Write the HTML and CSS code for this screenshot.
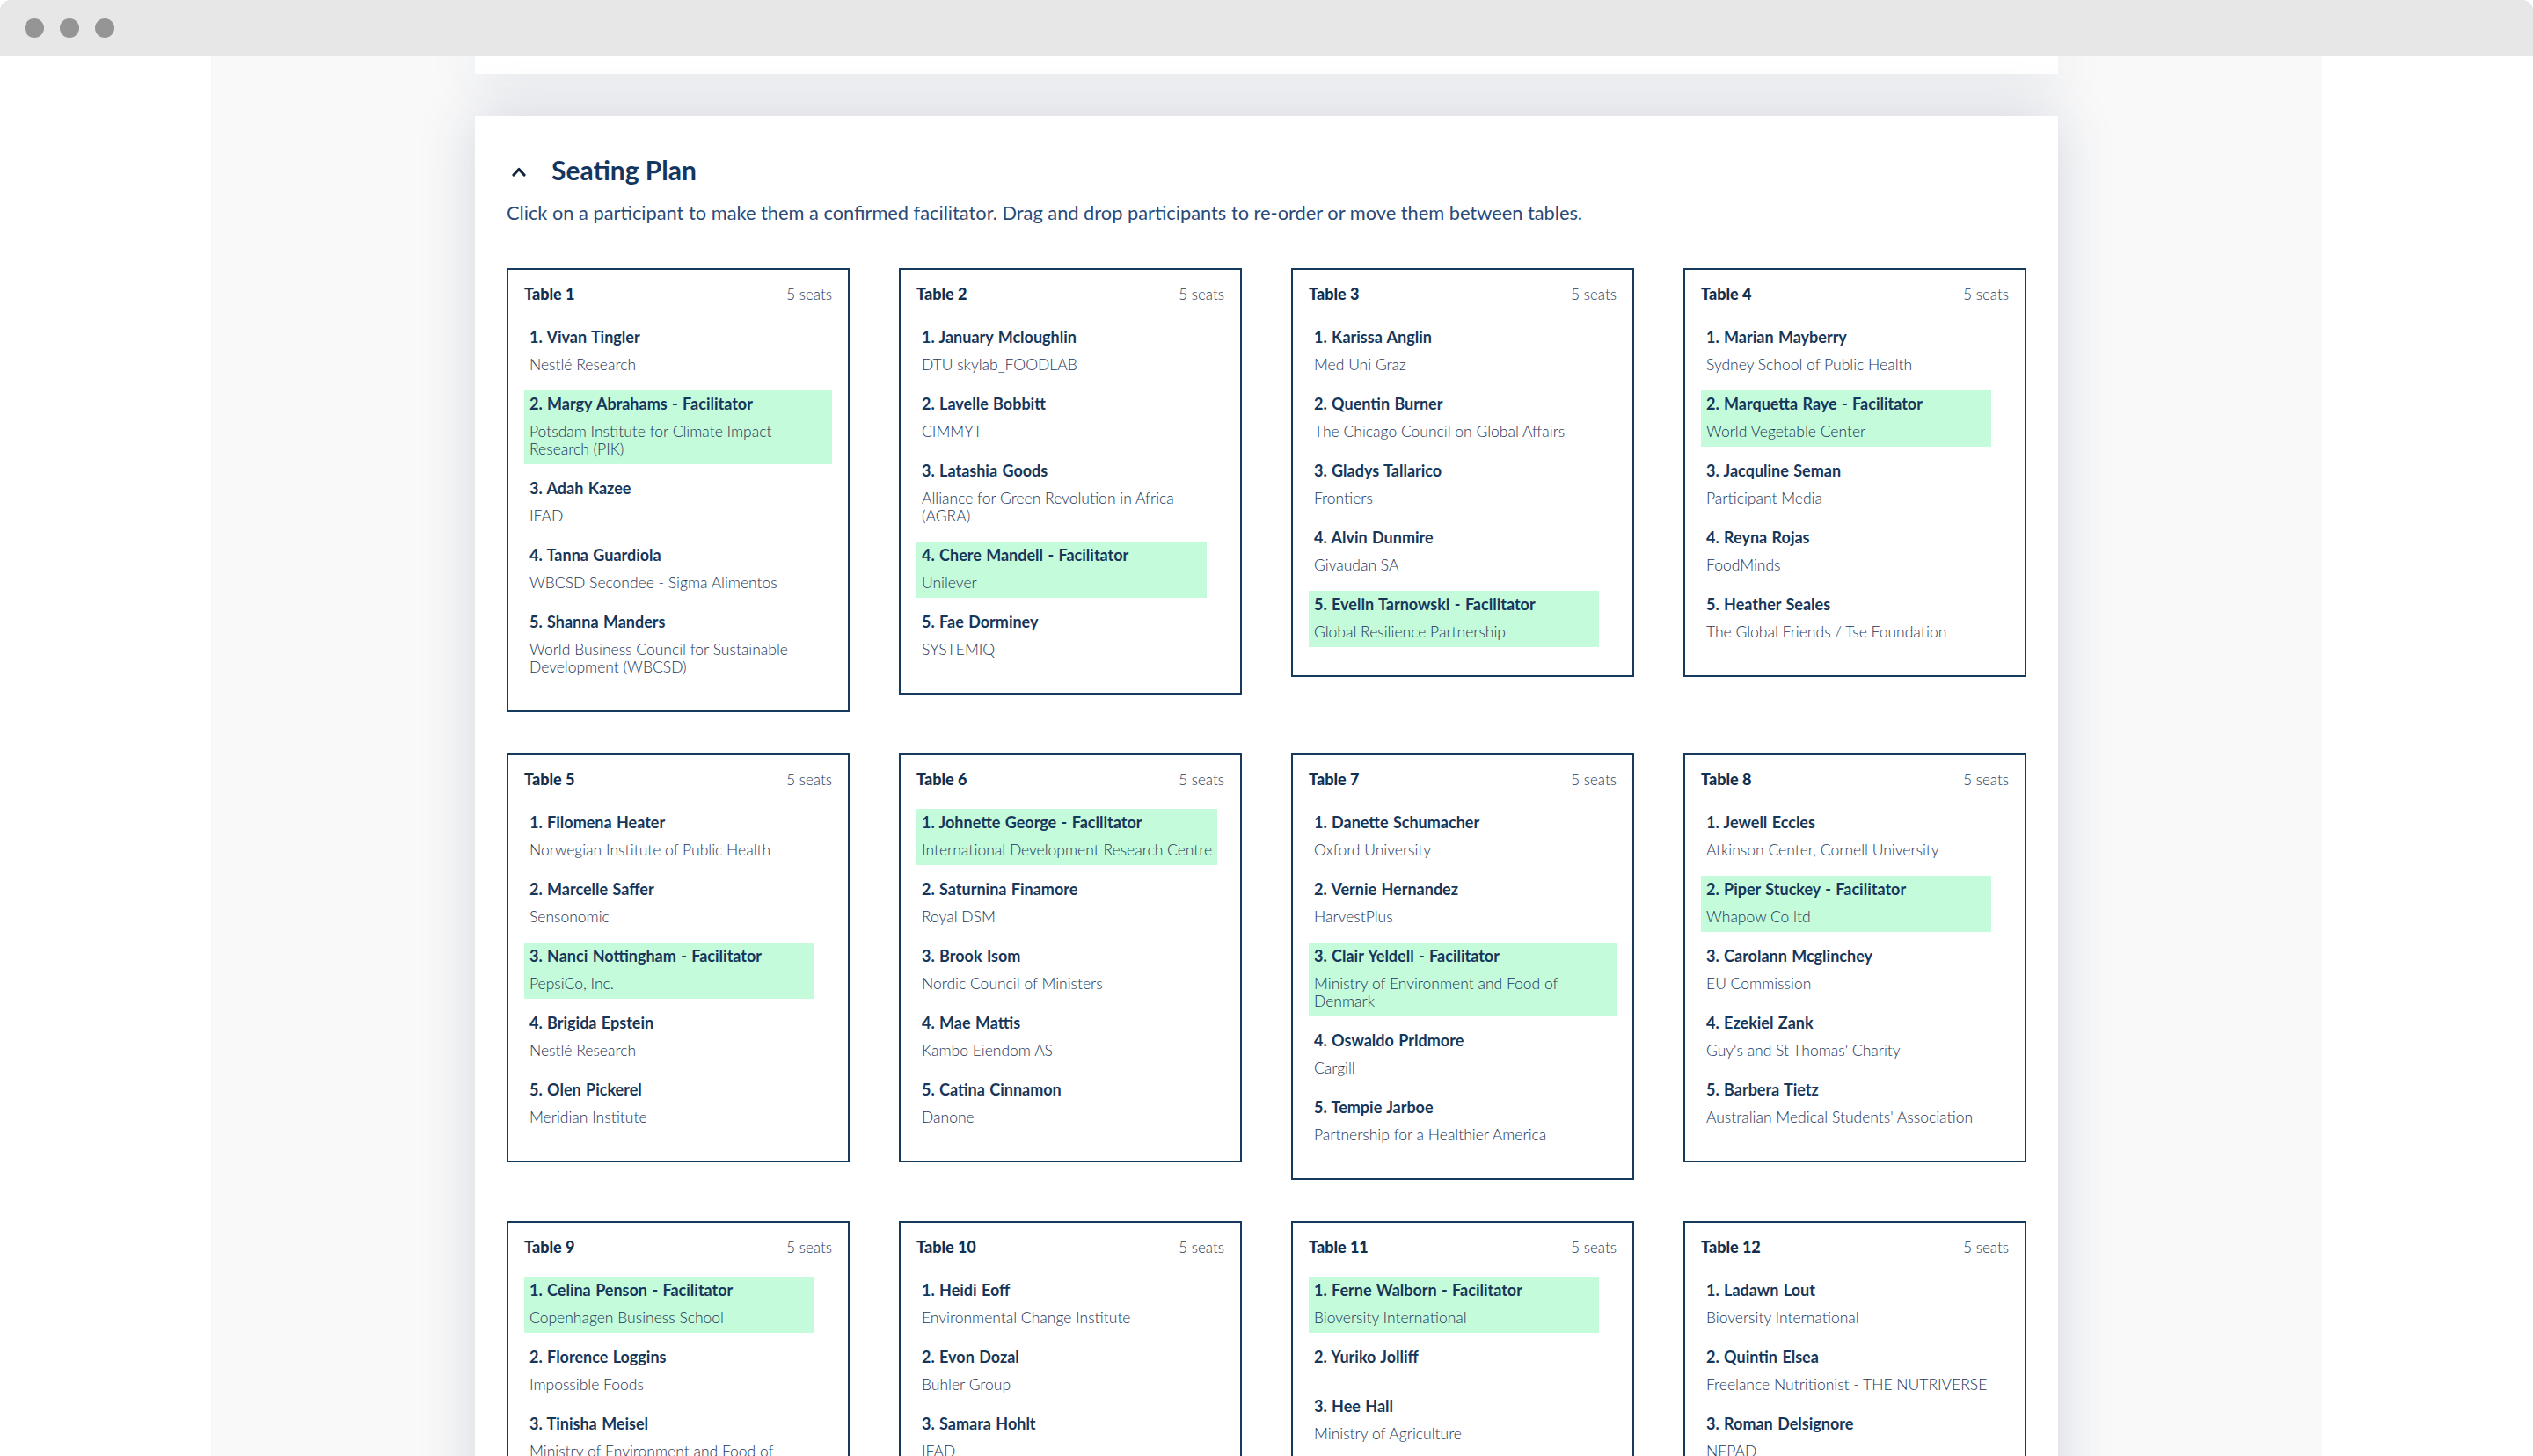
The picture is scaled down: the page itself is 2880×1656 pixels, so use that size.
FILE: index.html
```html
<!DOCTYPE html>
<html lang="en">
<head>
<meta charset="utf-8">
<title>Seating Plan</title>
<link rel="stylesheet" href="styles.css">
</head>
<body>
<div class="window">
  <div class="titlebar">
    <span class="dot"></span><span class="dot"></span><span class="dot"></span>
  </div>
  <div class="viewport">
    <div class="page">
      <div class="prev-card"></div>
      <section class="panel">
        <div class="panel-head">
          <svg class="chevron" width="16" height="12" viewBox="0 0 16 12"><polyline points="2,10 8,3.5 14,10" fill="none" stroke="#0f2540" stroke-width="3.2" stroke-linecap="round" stroke-linejoin="round"/></svg>
          <h2 class="panel-title">Seating Plan</h2>
        </div>
        <p class="panel-desc">Click on a participant to make them a confirmed facilitator. Drag and drop participants to re-order or move them between tables.</p>

        <div class="tables">
          <div class="table-card">
            <div class="table-head"><span class="table-name">Table 1</span><span class="table-seats">5 seats</span></div>
            <div class="person"><div class="name">1. Vivan Tingler</div><div class="org">Nestlé Research</div></div>
            <div class="person fac"><div class="name">2. Margy Abrahams - Facilitator</div><div class="org">Potsdam Institute for Climate Impact Research (PIK)</div></div>
            <div class="person"><div class="name">3. Adah Kazee</div><div class="org">IFAD</div></div>
            <div class="person"><div class="name">4. Tanna Guardiola</div><div class="org">WBCSD Secondee - Sigma Alimentos</div></div>
            <div class="person"><div class="name">5. Shanna Manders</div><div class="org">World Business Council for Sustainable Development (WBCSD)</div></div>
          </div>

          <div class="table-card">
            <div class="table-head"><span class="table-name">Table 2</span><span class="table-seats">5 seats</span></div>
            <div class="person"><div class="name">1. January Mcloughlin</div><div class="org">DTU skylab_FOODLAB</div></div>
            <div class="person"><div class="name">2. Lavelle Bobbitt</div><div class="org">CIMMYT</div></div>
            <div class="person"><div class="name">3. Latashia Goods</div><div class="org">Alliance for Green Revolution in Africa (AGRA)</div></div>
            <div class="person fac"><div class="name">4. Chere Mandell - Facilitator</div><div class="org">Unilever</div></div>
            <div class="person"><div class="name">5. Fae Dorminey</div><div class="org">SYSTEMIQ</div></div>
          </div>

          <div class="table-card">
            <div class="table-head"><span class="table-name">Table 3</span><span class="table-seats">5 seats</span></div>
            <div class="person"><div class="name">1. Karissa Anglin</div><div class="org">Med Uni Graz</div></div>
            <div class="person"><div class="name">2. Quentin Burner</div><div class="org">The Chicago Council on Global Affairs</div></div>
            <div class="person"><div class="name">3. Gladys Tallarico</div><div class="org">Frontiers</div></div>
            <div class="person"><div class="name">4. Alvin Dunmire</div><div class="org">Givaudan SA</div></div>
            <div class="person fac"><div class="name">5. Evelin Tarnowski - Facilitator</div><div class="org">Global Resilience Partnership</div></div>
          </div>

          <div class="table-card">
            <div class="table-head"><span class="table-name">Table 4</span><span class="table-seats">5 seats</span></div>
            <div class="person"><div class="name">1. Marian Mayberry</div><div class="org">Sydney School of Public Health</div></div>
            <div class="person fac"><div class="name">2. Marquetta Raye - Facilitator</div><div class="org">World Vegetable Center</div></div>
            <div class="person"><div class="name">3. Jacquline Seman</div><div class="org">Participant Media</div></div>
            <div class="person"><div class="name">4. Reyna Rojas</div><div class="org">FoodMinds</div></div>
            <div class="person"><div class="name">5. Heather Seales</div><div class="org">The Global Friends / Tse Foundation</div></div>
          </div>

          <div class="table-card">
            <div class="table-head"><span class="table-name">Table 5</span><span class="table-seats">5 seats</span></div>
            <div class="person"><div class="name">1. Filomena Heater</div><div class="org">Norwegian Institute of Public Health</div></div>
            <div class="person"><div class="name">2. Marcelle Saffer</div><div class="org">Sensonomic</div></div>
            <div class="person fac"><div class="name">3. Nanci Nottingham - Facilitator</div><div class="org">PepsiCo, Inc.</div></div>
            <div class="person"><div class="name">4. Brigida Epstein</div><div class="org">Nestlé Research</div></div>
            <div class="person"><div class="name">5. Olen Pickerel</div><div class="org">Meridian Institute</div></div>
          </div>

          <div class="table-card">
            <div class="table-head"><span class="table-name">Table 6</span><span class="table-seats">5 seats</span></div>
            <div class="person fac"><div class="name">1. Johnette George - Facilitator</div><div class="org">International Development Research Centre</div></div>
            <div class="person"><div class="name">2. Saturnina Finamore</div><div class="org">Royal DSM</div></div>
            <div class="person"><div class="name">3. Brook Isom</div><div class="org">Nordic Council of Ministers</div></div>
            <div class="person"><div class="name">4. Mae Mattis</div><div class="org">Kambo Eiendom AS</div></div>
            <div class="person"><div class="name">5. Catina Cinnamon</div><div class="org">Danone</div></div>
          </div>

          <div class="table-card">
            <div class="table-head"><span class="table-name">Table 7</span><span class="table-seats">5 seats</span></div>
            <div class="person"><div class="name">1. Danette Schumacher</div><div class="org">Oxford University</div></div>
            <div class="person"><div class="name">2. Vernie Hernandez</div><div class="org">HarvestPlus</div></div>
            <div class="person fac"><div class="name">3. Clair Yeldell - Facilitator</div><div class="org">Ministry of Environment and Food of Denmark</div></div>
            <div class="person"><div class="name">4. Oswaldo Pridmore</div><div class="org">Cargill</div></div>
            <div class="person"><div class="name">5. Tempie Jarboe</div><div class="org">Partnership for a Healthier America</div></div>
          </div>

          <div class="table-card">
            <div class="table-head"><span class="table-name">Table 8</span><span class="table-seats">5 seats</span></div>
            <div class="person"><div class="name">1. Jewell Eccles</div><div class="org">Atkinson Center, Cornell University</div></div>
            <div class="person fac"><div class="name">2. Piper Stuckey - Facilitator</div><div class="org">Whapow Co ltd</div></div>
            <div class="person"><div class="name">3. Carolann Mcglinchey</div><div class="org">EU Commission</div></div>
            <div class="person"><div class="name">4. Ezekiel Zank</div><div class="org">Guy's and St Thomas' Charity</div></div>
            <div class="person"><div class="name">5. Barbera Tietz</div><div class="org">Australian Medical Students' Association</div></div>
          </div>

          <div class="table-card">
            <div class="table-head"><span class="table-name">Table 9</span><span class="table-seats">5 seats</span></div>
            <div class="person fac"><div class="name">1. Celina Penson - Facilitator</div><div class="org">Copenhagen Business School</div></div>
            <div class="person"><div class="name">2. Florence Loggins</div><div class="org">Impossible Foods</div></div>
            <div class="person"><div class="name">3. Tinisha Meisel</div><div class="org">Ministry of Environment and Food of Denmark</div></div>
          </div>

          <div class="table-card">
            <div class="table-head"><span class="table-name">Table 10</span><span class="table-seats">5 seats</span></div>
            <div class="person"><div class="name">1. Heidi Eoff</div><div class="org">Environmental Change Institute</div></div>
            <div class="person"><div class="name">2. Evon Dozal</div><div class="org">Buhler Group</div></div>
            <div class="person"><div class="name">3. Samara Hohlt</div><div class="org">IFAD</div></div>
          </div>

          <div class="table-card">
            <div class="table-head"><span class="table-name">Table 11</span><span class="table-seats">5 seats</span></div>
            <div class="person fac"><div class="name">1. Ferne Walborn - Facilitator</div><div class="org">Bioversity International</div></div>
            <div class="person"><div class="name">2. Yuriko Jolliff</div><div class="org"></div></div>
            <div class="person"><div class="name">3. Hee Hall</div><div class="org">Ministry of Agriculture</div></div>
          </div>

          <div class="table-card">
            <div class="table-head"><span class="table-name">Table 12</span><span class="table-seats">5 seats</span></div>
            <div class="person"><div class="name">1. Ladawn Lout</div><div class="org">Bioversity International</div></div>
            <div class="person"><div class="name">2. Quintin Elsea</div><div class="org">Freelance Nutritionist - THE NUTRIVERSE</div></div>
            <div class="person"><div class="name">3. Roman Delsignore</div><div class="org">NEPAD</div></div>
          </div>
        </div>
      </section>
    </div>
  </div>
</div>
</body>
</html>
```

FILE: styles.css
```css
* { box-sizing: border-box; }

html, body {
  margin: 0;
  padding: 0;
  background: #ffffff;
}

body {
  font-family: "Lato", "Open Sans", sans-serif;
  color: #16365a;
}

.window {
  width: 2880px;
  height: 1656px;
  overflow: hidden;
  display: flex;
  flex-direction: column;
  background: #ffffff;
  border-radius: 12px 12px 18px 18px;
}

.titlebar {
  height: 64px;
  flex: none;
  background: #e7e7e7;
  display: flex;
  align-items: center;
  gap: 18px;
  padding-left: 28px;
}

.dot {
  width: 22px;
  height: 22px;
  border-radius: 50%;
  background: #959595;
}

.viewport {
  flex: 1;
  background: #ffffff;
  display: flex;
  justify-content: center;
  overflow: hidden;
}

.page {
  width: 2400px;
  background: #f9f9f9;
  padding: 0 300px;
}

.prev-card {
  height: 20px;
  background: #ffffff;
  box-shadow: 0 0 60px rgba(40, 60, 110, 0.18);
}

.panel {
  margin-top: 48px;
  background: #ffffff;
  box-shadow: 0 0 60px rgba(40, 60, 110, 0.18);
  padding: 43px 36px 60px;
  min-height: 1600px;
}

.panel-head {
  display: flex;
  align-items: center;
  gap: 29px;
  height: 36px;
  padding-left: 6px;
}

.chevron { flex: none; margin-top: 4px; }

.panel-title {
  margin: 0;
  font-size: 30px;
  line-height: 36px;
  font-weight: 700;
  color: #143560;
}

.panel-desc {
  margin: 17px 0 0;
  font-size: 21.8px;
  line-height: 28px;
  color: #2a4a78;
}

.tables {
  margin-top: 49px;
  display: grid;
  grid-template-columns: repeat(4, 390px);
  column-gap: 56px;
  row-gap: 47px;
  align-items: start;
}

.table-card {
  border: 2px solid #163a5e;
  padding: 18px 18px 20px;
  background: #ffffff;
}

.table-head {
  display: flex;
  justify-content: space-between;
  align-items: baseline;
  line-height: 18px;
  margin-bottom: 24px;
}

.table-name {
  font-size: 18px;
  font-weight: 900;
  color: #12304f;
}

.table-seats {
  font-size: 17px;
  font-weight: 300;
  color: #1f3d5f;
}

.person {
  width: fit-content;
  min-width: 330px;
  max-width: 100%;
  padding: 5px 6px 7px;
  margin-bottom: 12px;
}

.person.fac {
  background: #c4fbdb;
}

.name {
  font-size: 18px;
  line-height: 20px;
  font-weight: 700;
  word-spacing: 1px;
  color: #16365a;
}

.org {
  margin-top: 12px;
  font-size: 17.5px;
  line-height: 20px;
  font-weight: 300;
  color: #1c3658;
}
```
